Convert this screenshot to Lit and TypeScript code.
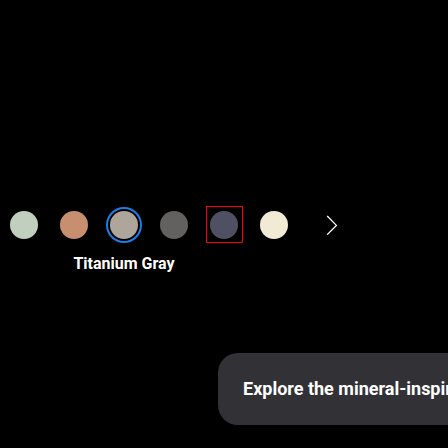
import { LitElement, html, css } from "lit";
import { customElement, state } from "lit/decorators.js";
import { classMap } from "lit/directives/class-map.js";
import { styleMap } from "lit/directives/style-map.js";

interface Finish {
  name: string;
  color: string;
  flagged?: boolean;
}

const FINISHES: Finish[] = [
  { name: "Titanium Green", color: "#c1cfbf" },
  { name: "Titanium Orange", color: "#c78e70" },
  { name: "Titanium Gray", color: "#aea59b" },
  { name: "Titanium Black", color: "#62615f" },
  { name: "Titanium Violet", color: "#505064", flagged: true },
  { name: "Titanium Yellow", color: "#f1ead4" },
];

@customElement("app-root")
export class AppRoot extends LitElement {
  @state() private selected = 2;

  static styles = css`
    :host {
      display: block;
      box-sizing: border-box;
      min-height: 100vh;
      padding-top: 207px;
      overflow: hidden;
      background: #000;
      color: #fff;
      font-family: Roboto, sans-serif;
      font-weight: 700;
    }
    .picker {
      display: flex;
      align-items: flex-start;
      gap: 22px;
      padding-left: 6px;
    }
    .swatches {
      display: grid;
      grid-template-columns: repeat(6, 36px);
      gap: 9px 14px;
      margin: 0;
      padding: 0;
      border: 0;
    }
    .swatch {
      appearance: none;
      box-sizing: border-box;
      width: 36px;
      height: 36px;
      margin: 0;
      padding: 2px;
      border: 2px solid transparent;
      border-radius: 50%;
      background-clip: content-box;
      cursor: pointer;
    }
    .swatch:checked {
      border-color: #1c7de8;
    }
    .cell {
      display: flex;
      height: 36px;
    }
    .flagged {
      position: relative;
    }
    .flagged::after {
      content: "";
      position: absolute;
      inset: -1px -1px 0 0;
      border: 1px solid #f00;
      pointer-events: none;
    }
    .name {
      grid-column: 1 / span 5;
      text-align: center;
      font-size: 16px;
      line-height: 24px;
    }
    .next {
      display: grid;
      place-items: center;
      width: 36px;
      height: 36px;
      padding: 0;
      border: 0;
      background: none;
      color: inherit;
      cursor: pointer;
    }
    .card {
      margin: 77px 0 23px 218px;
      padding: 24px 0 24px 25px;
      border-radius: 20px 0 0 20px;
      background: #323236;
      overflow: hidden;
      white-space: nowrap;
      font-size: 18px;
      line-height: 24px;
    }
    .title {
      margin: 0;
      font: inherit;
    }
  `;

  render() {
    return html`
      <section class="picker">
        <fieldset class="swatches" aria-label="Color">
          ${FINISHES.map(
            (finish, i) => html`
              <label class=${classMap({ cell: true, flagged: !!finish.flagged })}>
                <input
                  class="swatch"
                  type="radio"
                  name="finish"
                  aria-label=${finish.name}
                  style=${styleMap({ backgroundColor: finish.color })}
                  .checked=${i === this.selected}
                  @change=${() => (this.selected = i)}
                />
              </label>
            `,
          )}
          <output class="name">${FINISHES[this.selected].name}</output>
        </fieldset>
        <button class="next" type="button" aria-label="Next">
          <svg width="12" height="20" viewBox="0 0 12 20" fill="none" stroke="currentColor" stroke-width="1.3">
            <path d="M1.2 1 10.4 10.4 1.2 19.6" />
          </svg>
        </button>
      </section>
      <section class="card">
        <h2 class="title">Explore the mineral-inspir</h2>
      </section>
    `;
  }
}
